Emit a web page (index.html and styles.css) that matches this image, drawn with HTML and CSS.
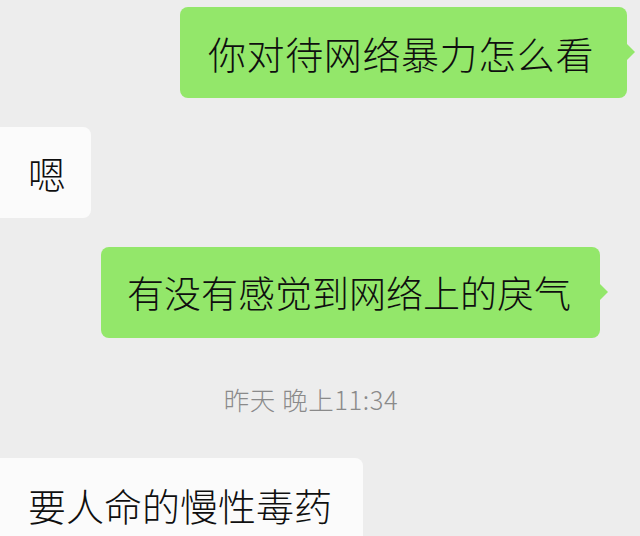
FILE: index.html
```html
<!DOCTYPE html>
<html lang="zh-CN">
<head>
<meta charset="utf-8">
<link rel="stylesheet" href="styles.css">
</head>
<body>
<div class="chat">
  <div class="row row-right row-first">
    <div class="bubble bubble-green bubble-first">你对待网络暴力怎么看</div>
  </div>
  <div class="row row-left">
    <div class="bubble bubble-white bubble-short">嗯</div>
  </div>
  <div class="row row-right row-third">
    <div class="bubble bubble-green bubble-narrow">有没有感觉到网络上的戾气</div>
  </div>
  <div class="time">昨天 晚上11:34</div>
  <div class="row row-left">
    <div class="bubble bubble-white bubble-last">要人命的慢性毒药</div>
  </div>
</div>
</body>
</html>
```
FILE: styles.css
```css
html, body {
  margin: 0;
  padding: 0;
  background: #ededed;
  width: 640px;
  height: 536px;
  overflow: hidden;
}
.chat {
  display: flex;
  flex-direction: column;
  padding-top: 7px;
  font-family: "Noto Sans CJK SC", "Noto Sans", sans-serif;
  font-weight: 300;
  color: #0f0f0f;
}
.row {
  display: flex;
  margin-bottom: 29px;
}
.row-right {
  justify-content: flex-end;
}
.row-first {
  padding-right: 13px;
}
.row-third {
  padding-right: 40px;
}
.row-left {
  justify-content: flex-start;
}
.bubble {
  position: relative;
  font-size: 38px;
  line-height: 49px;
  padding: 21px 28px;
  border-radius: 8px;
  white-space: nowrap;
}
.bubble-first {
  letter-spacing: 0.6px;
  padding-right: 33px;
}
.bubble-green {
  background: #93e76a;
}
.bubble-green::after {
  content: "";
  position: absolute;
  right: -8px;
  top: 36px;
  border-top: 9px solid transparent;
  border-bottom: 9px solid transparent;
  border-left: 9px solid #93e76a;
}
.bubble-narrow {
  font-size: 37px;
  padding-left: 26px;
  padding-right: 29px;
}
.bubble-white {
  background: #fbfbfb;
  border-top-left-radius: 0;
  border-bottom-left-radius: 0;
}
.bubble-short {
  padding-right: 25px;
}
.bubble-last {
  padding-top: 22px;
  padding-right: 31px;
}
.time {
  align-self: center;
  margin: 16px 18px 43px 0;
  font-size: 25.5px;
  letter-spacing: 0.6px;
  line-height: 32px;
  color: #8a8a8a;
}
```
